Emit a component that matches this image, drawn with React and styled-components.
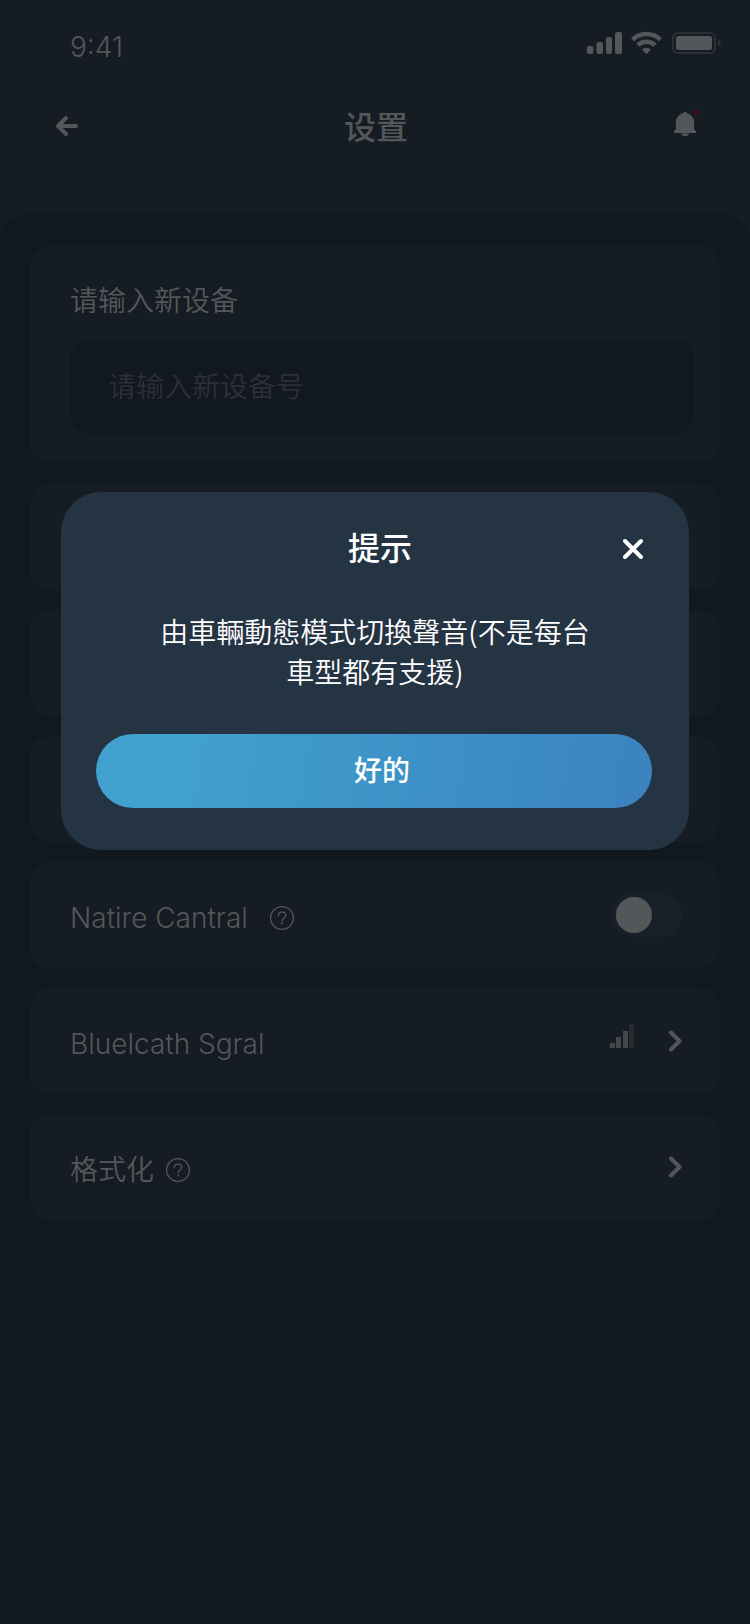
import React, { useState } from "react";
import styled, { createGlobalStyle } from "styled-components";

const GlobalStyle = createGlobalStyle`
  *, *::before, *::after { box-sizing: border-box; }
  body {
    margin: 0;
    background: #11181f;
    color: #54575a;
    font-family: Inter, "Noto Sans CJK SC", sans-serif;
    font-size: 28px;
    font-weight: 350;
    line-height: 40px;
  }
  button, input { font: inherit; color: inherit; }
  h1, h2, p { margin: 0; }
  svg { display: block; flex: none; }
`;

const Page = styled.div`
  min-height: 100vh;
  display: flex;
  flex-direction: column;
  background: #151c23;
`;

const StatusBar = styled.div`
  display: flex;
  justify-content: space-between;
  align-items: flex-start;
  padding: 27px 28px 0 70px;
`;

const StatusIcons = styled.div`
  display: flex;
  gap: 8px;
  padding-top: 4px;
`;

const NavBar = styled.header`
  display: grid;
  grid-template-columns: 40px 1fr 40px;
  align-items: center;
  height: 118px;
  padding: 0 44px 0 46px;
`;

const Title = styled.h1`
  padding-top: 4px;
  font-size: 32px;
  font-weight: 500;
  line-height: 48px;
  text-align: center;
`;

const IconButton = styled.button`
  display: flex;
  align-items: center;
  justify-content: center;
  width: 40px;
  height: 40px;
  padding: 0;
  border: 0;
  background: none;
  cursor: pointer;
`;

const Panel = styled.main`
  flex: 1;
  display: flex;
  flex-direction: column;
  gap: 20px;
  margin-top: 29px;
  padding: 32px 30px;
  border-radius: 28px 28px 0 0;
  background: #11181f;
`;

const Card = styled.section`
  border-radius: 20px;
  background: #151c23;
`;

const FormCard = styled(Card)`
  display: flex;
  flex-direction: column;
  gap: 19px;
  margin-bottom: 2px;
  padding: 35px 26px 28px 40px;
`;

const TextInput = styled.input`
  width: 100%;
  height: 94px;
  padding: 0 38px;
  border: 0;
  border-radius: 20px;
  outline: 0;
  background: #11181f;
  &::placeholder { color: #2b3035; opacity: 1; }
`;

const Row = styled(Card)`
  display: flex;
  align-items: center;
  justify-content: space-between;
  height: 106px;
  padding: 0 38px 0 40px;
`;

const RowLabel = styled.div`
  display: flex;
  align-items: center;
  gap: ${(p) => p.$gap || 11}px;
  padding-top: 6px;
`;

const RowEnd = styled.div`
  display: flex;
  align-items: flex-start;
  gap: 34px;
`;

const Switch = styled.input`
  appearance: none;
  width: 70px;
  height: 44px;
  margin: 0;
  padding: 4px;
  border-radius: 22px;
  background: #182029;
  cursor: pointer;
  &::before {
    content: "";
    display: block;
    width: 36px;
    height: 36px;
    border-radius: 50%;
    background: #54575a;
  }
  &:checked::before { margin-left: 26px; }
`;

const HelpButton = styled(IconButton)`
  width: 26px;
  height: 26px;
`;

const ChevronButton = styled(IconButton)`
  width: 14px;
  height: 34px;
`;

const Overlay = styled.div`
  position: fixed;
  inset: 0;
  padding: 492px 61px 0;
`;

const Dialog = styled.div`
  padding: 33px 37px 42px 35px;
  border-radius: 40px;
  background: #253443;
  color: #fff;
`;

const DialogHeader = styled.div`
  display: grid;
  grid-template-columns: 40px 1fr 40px;
  align-items: center;
  padding-left: 12px;
`;

const DialogTitle = styled.h2`
  grid-column: 2;
  font-size: 32px;
  font-weight: 500;
  line-height: 48px;
  text-align: center;
`;

const Message = styled.p`
  margin: 38px 0 43px;
  padding: 0 61px 0 63px;
  font-family: "Noto Sans CJK TC", sans-serif;
  text-align: center;
`;

const Confirm = styled.button`
  display: block;
  width: 100%;
  height: 74px;
  padding: 0 0 0 16px;
  border: 0;
  border-radius: 37px;
  background: linear-gradient(100deg, #41a2cf 12%, #3b84c0 94%);
  font-weight: 500;
  cursor: pointer;
`;

const CellSignal = () => (
  <svg width="36" height="24" viewBox="0 0 36 24" fill="currentColor" aria-hidden="true">
    <rect x="0" y="15" width="6.5" height="8" rx="2" />
    <rect x="9.5" y="11" width="6.5" height="12" rx="2" />
    <rect x="19" y="6" width="6" height="17" rx="2" />
    <rect x="28" y="1" width="7" height="22" rx="2" />
  </svg>
);

const Wifi = () => (
  <svg width="33" height="24" viewBox="0 0 33 24" fill="none" stroke="currentColor" strokeWidth="4.4" aria-hidden="true">
    <path d="M1.600 8.600a20.200 20.200 0 0 1 27.800 0" />
    <path d="M6.900 14.200a12.500 12.500 0 0 1 17.200 0" />
    <path d="M10.900 18.600a6.800 6.800 0 0 1 9.200 0L15.500 23.200z" fill="currentColor" stroke="none" />
  </svg>
);

const Battery = () => (
  <svg width="50" height="24" viewBox="0 0 50 24" aria-hidden="true">
    <rect x="1" y="2" width="42" height="20" rx="5" fill="none" stroke="#2a3038" strokeWidth="2" />
    <rect x="4" y="5" width="36" height="14" rx="2.5" fill="currentColor" />
    <path d="M46 8v8c1.700-.7 2.800-2.200 2.800-4S47.700 8.700 46 8z" fill="#2a3038" />
  </svg>
);

const BackArrow = () => (
  <svg width="24" height="24" viewBox="0 0 24 24" fill="none" stroke="currentColor" strokeWidth="4" strokeLinecap="round" strokeLinejoin="round" aria-hidden="true">
    <path d="M12 4 4 12l8 8M4.400 12H22" />
  </svg>
);

const Bell = () => (
  <svg width="28" height="32" viewBox="0 2 28 32" fill="currentColor" aria-hidden="true">
    <path d="M13 4c-1 0-1.700.5-2 1.300C6.700 6.400 3.800 10.200 3.800 14.500v6.800L2 23.200V25h22v-1.800l-1.800-1.900v-6.800c0-4.300-2.900-8.100-7.200-9.200C14.700 4.500 14 4 13 4z" />
    <path d="M9 25.400h8c-.5 1.700-2 2.800-4 2.800s-3.500-1.100-4-2.800z" />
    <circle cx="24" cy="4" r="2" fill="#650811" />
  </svg>
);

const Chevron = () => (
  <svg width="14" height="24" viewBox="0 0 14 24" fill="none" stroke="currentColor" strokeWidth="4" strokeLinecap="round" strokeLinejoin="round" aria-hidden="true">
    <path d="M3 3.500 11.500 12 3 20.500" />
  </svg>
);

const SignalStrength = () => (
  <svg width="24" height="24" viewBox="0 0 24 24" fill="#44484b" aria-hidden="true">
    <rect y="19" width="5" height="5" />
    <rect x="6" y="13" width="5" height="11" />
    <rect x="13" y="7" width="5" height="17" />
    <rect x="19" width="5" height="24" fill="#262b2f" />
  </svg>
);

const Help = () => (
  <svg width="26" height="26" viewBox="0 0 26 26" fill="none" stroke="currentColor" strokeWidth="1.300" aria-hidden="true">
    <circle cx="13" cy="13" r="11.400" />
    <path d="M9.300 10.700c0-2.100 1.600-3.500 3.700-3.500s3.700 1.300 3.700 3.300c0 2.500-3.600 2.700-3.600 5.600" strokeLinecap="round" />
    <circle cx="13" cy="18.600" r="1" fill="currentColor" stroke="none" />
  </svg>
);

const Close = () => (
  <svg width="22" height="22" viewBox="0 0 22 22" fill="none" stroke="currentColor" strokeWidth="4" strokeLinecap="round" aria-hidden="true">
    <path d="m4 3 16 16M20 3 4 19" />
  </svg>
);

export default function App() {
  const [open, setOpen] = useState(true);
  const close = () => setOpen(false);

  return (
    <>
      <GlobalStyle />
      <Page>
        <StatusBar>
          <span>9:41</span>
          <StatusIcons>
            <CellSignal />
            <Wifi />
            <Battery />
          </StatusIcons>
        </StatusBar>
        <NavBar>
          <IconButton aria-label="返回"><BackArrow /></IconButton>
          <Title>设置</Title>
          <IconButton aria-label="通知"><Bell /></IconButton>
        </NavBar>
        <Panel>
          <FormCard>
            <label htmlFor="device">请输入新设备</label>
            <TextInput id="device" type="text" placeholder="请输入新设备号" />
          </FormCard>
          <Row />
          <Row />
          <Row />
          <Row>
            <RowLabel $gap={21}>
              <label htmlFor="control">Natire Cantral</label>
              <HelpButton aria-label="帮助"><Help /></HelpButton>
            </RowLabel>
            <Switch id="control" type="checkbox" role="switch" />
          </Row>
          <Row>
            <RowLabel>Bluelcath Sgral</RowLabel>
            <RowEnd>
              <SignalStrength />
              <ChevronButton aria-label="Bluelcath Sgral"><Chevron /></ChevronButton>
            </RowEnd>
          </Row>
          <Row>
            <RowLabel>
              格式化
              <HelpButton aria-label="帮助"><Help /></HelpButton>
            </RowLabel>
            <RowEnd>
              <ChevronButton aria-label="格式化"><Chevron /></ChevronButton>
            </RowEnd>
          </Row>
        </Panel>
      </Page>
      {open && (
        <Overlay>
          <Dialog role="dialog" aria-modal="true" aria-labelledby="dialog-title">
            <DialogHeader>
              <DialogTitle id="dialog-title">提示</DialogTitle>
              <IconButton aria-label="关闭" onClick={close}><Close /></IconButton>
            </DialogHeader>
            <Message lang="zh-Hant">由車輛動態模式切換聲音(不是每台車型都有支援)</Message>
            <Confirm onClick={close}>好的</Confirm>
          </Dialog>
        </Overlay>
      )}
    </>
  );
}
